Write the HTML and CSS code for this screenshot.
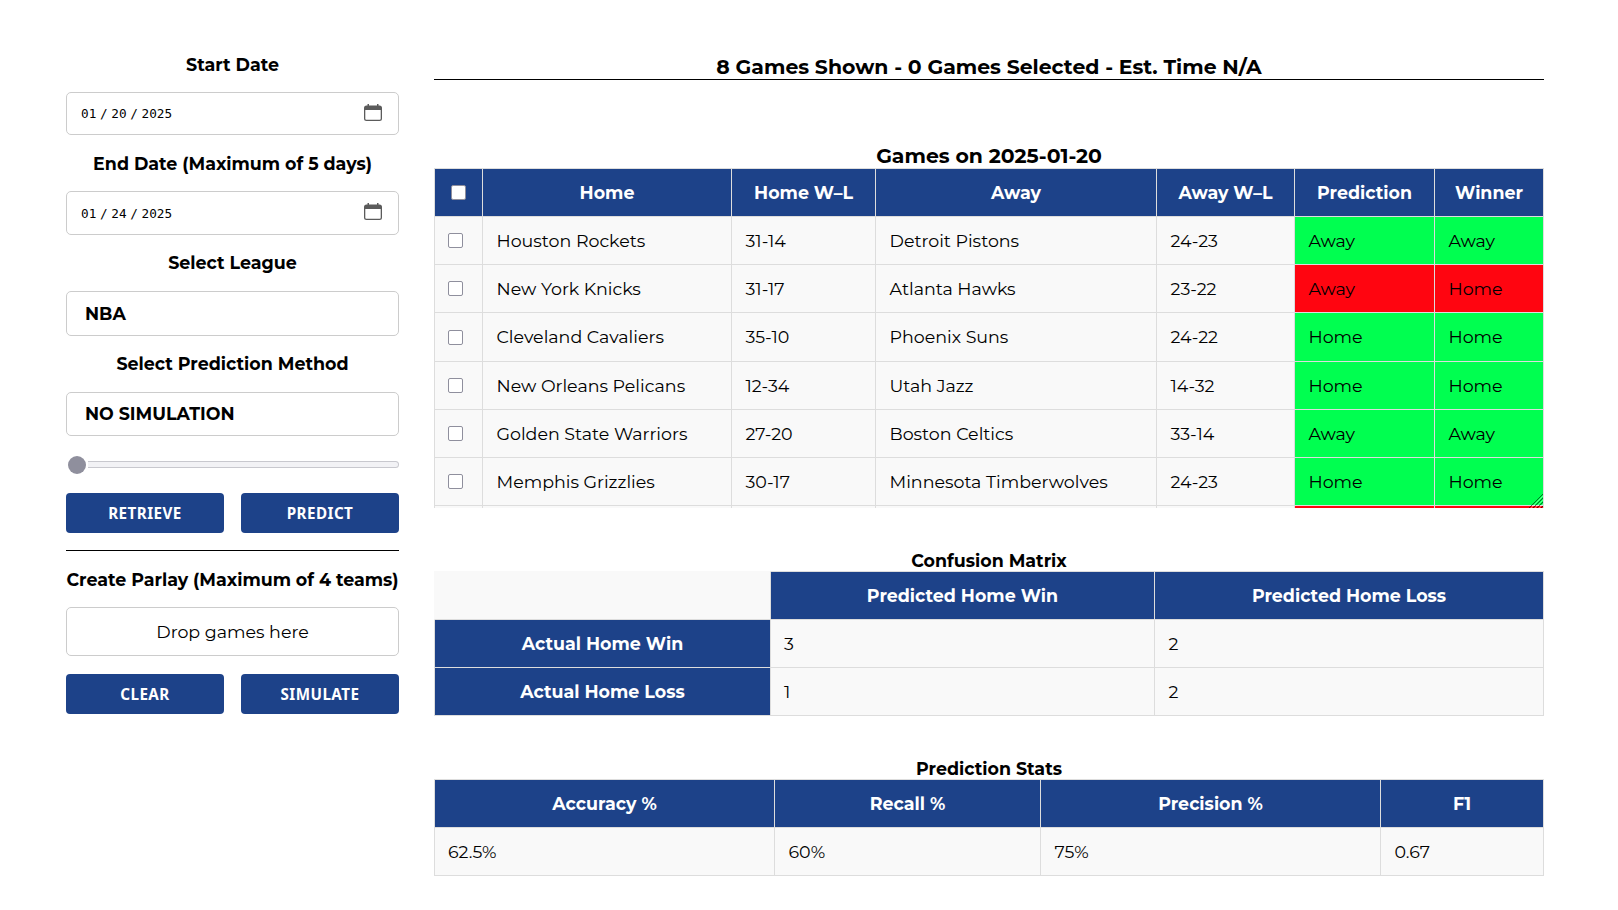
FILE: index.html
```html
<!DOCTYPE html>
<html lang="en">
<head>
<meta charset="utf-8">
<title>Game Predictions</title>
<link rel="stylesheet" href="styles.css">
</head>
<body>
<div class="page">
<aside class="sidebar">
  <div class="label start">Start Date</div>
  <div class="date"><span class="parts"><span>01</span><i>/</i><span>20</span><i>/</i><span>2025</span></span>
    <svg class="cal" width="18" height="18" viewBox="0 0 18 18"><path fill="#5b5b5b" fill-rule="evenodd" d="M3.500 0h1.500v1.500h8V0h1.500v1.500h1A2.500 2.500 0 0 1 18 4v10.500a2.500 2.500 0 0 1-2.500 2.500h-13A2.500 2.500 0 0 1 0 14.500V4a2.500 2.500 0 0 1 2.500-2.500h1zM1.300 6v8.700a1 1 0 0 0 1 1h13.400a1 1 0 0 0 1-1V6z"/></svg></div>
  <div class="label end">End Date (Maximum of 5 days)</div>
  <div class="date second"><span class="parts"><span>01</span><i>/</i><span>24</span><i>/</i><span>2025</span></span>
    <svg class="cal" width="18" height="18" viewBox="0 0 18 18"><path fill="#5b5b5b" fill-rule="evenodd" d="M3.500 0h1.500v1.500h8V0h1.500v1.500h1A2.500 2.500 0 0 1 18 4v10.500a2.500 2.500 0 0 1-2.500 2.500h-13A2.500 2.500 0 0 1 0 14.500V4a2.500 2.500 0 0 1 2.500-2.500h1zM1.300 6v8.700a1 1 0 0 0 1 1h13.400a1 1 0 0 0 1-1V6z"/></svg></div>
  <div class="label league">Select League</div>
  <div class="select nba">NBA</div>
  <div class="label method">Select Prediction Method</div>
  <div class="select sim">NO SIMULATION</div>
  <div class="slider"><span class="thumb"></span><span class="track"></span></div>
  <div class="buttons"><button>RETRIEVE</button><button>PREDICT</button></div>
  <div class="rule"></div>
  <div class="label parlay">Create Parlay (Maximum of 4 teams)</div>
  <div class="drop">Drop games here</div>
  <div class="buttons"><button>CLEAR</button><button>SIMULATE</button></div>
</aside>
<main class="main">
  <h1 class="summary">8 Games Shown - 0 Games Selected - Est. Time N/A</h1>
  <h2 class="games-title">Games on 2025-01-20</h2>
  <div class="games">
    <table>
      <colgroup><col class="g1"><col class="g2"><col class="g3"><col class="g4"><col class="g5"><col class="g6"><col class="g7"></colgroup>
      <tr><th><span class="box"></span></th><th>Home</th><th>Home W–L</th><th>Away</th><th>Away W–L</th><th>Prediction</th><th>Winner</th></tr>
      <tr><td><span class="box"></span></td><td>Houston Rockets</td><td>31-14</td><td>Detroit Pistons</td><td>24-23</td><td class="hit">Away</td><td class="hit">Away</td></tr>
      <tr><td><span class="box"></span></td><td>New York Knicks</td><td>31-17</td><td>Atlanta Hawks</td><td>23-22</td><td class="miss">Away</td><td class="miss">Home</td></tr>
      <tr class="tall"><td><span class="box"></span></td><td>Cleveland Cavaliers</td><td>35-10</td><td>Phoenix Suns</td><td>24-22</td><td class="hit">Home</td><td class="hit">Home</td></tr>
      <tr><td><span class="box"></span></td><td>New Orleans Pelicans</td><td>12-34</td><td>Utah Jazz</td><td>14-32</td><td class="hit">Home</td><td class="hit">Home</td></tr>
      <tr><td><span class="box"></span></td><td>Golden State Warriors</td><td>27-20</td><td>Boston Celtics</td><td>33-14</td><td class="hit">Away</td><td class="hit">Away</td></tr>
      <tr><td><span class="box"></span></td><td>Memphis Grizzlies</td><td>30-17</td><td>Minnesota Timberwolves</td><td>24-23</td><td class="hit">Home</td><td class="hit">Home</td></tr>
      <tr><td></td><td></td><td></td><td></td><td></td><td class="miss"></td><td class="miss"></td></tr>
    </table>
    <svg class="grip" width="14" height="15" viewBox="0 0 14 15"><g fill="none" stroke="#000" stroke-opacity=".55"><path d="M0 15 14 1M4 15 14 5M8 15l6-6M12 15l2-2"/></g><path d="M2 15 14 3M6 15l8-8M10 15l4-4" stroke="#fff" stroke-opacity=".35" fill="none"/></svg>
  </div>
  <h3 class="matrix-title">Confusion Matrix</h3>
  <table>
    <colgroup><col class="m1"><col class="m2"><col class="m3"></colgroup>
    <tr><td class="corner"></td><th>Predicted Home Win</th><th>Predicted Home Loss</th></tr>
    <tr><th>Actual Home Win</th><td>3</td><td>2</td></tr>
    <tr><th>Actual Home Loss</th><td>1</td><td>2</td></tr>
  </table>
  <h3 class="stats-title">Prediction Stats</h3>
  <table>
    <colgroup><col class="s1"><col class="s2"><col class="s3"><col class="s4"></colgroup>
    <tr><th>Accuracy %</th><th>Recall %</th><th>Precision %</th><th>F1</th></tr>
    <tr><td>62.5%</td><td>60%</td><td>75%</td><td>0.67</td></tr>
  </table>
</main>
</div>
</body>
</html>
```
FILE: styles.css
```css
* { box-sizing: border-box; }
body { margin: 0; background: #fff; color: #000; font-family: Montserrat, Inter, sans-serif; font-size: 17.450px; line-height: 20px; }
.page { display: flex; gap: 35px; width: 1618px; height: 910px; padding: 52px 74px 0 66px; overflow: hidden; }
.sidebar { width: 333px; flex: none; display: flex; flex-direction: column; }
.label { height: 20px; margin: 20px 0 16px; text-align: center; font-weight: 700; white-space: nowrap; display: flex; justify-content: center; }
.label.start { margin: 3px 0 17px; }
.label.end { margin: 19px 0 17px; }
.label.league { margin: 18px 0 18px; }
.label.method { margin: 18px 0 18px; }
.label.parlay { margin: 19px 0 17px; }
.date, .select, .drop { border: 1px solid #ccc; border-radius: 5px; display: flex; align-items: center; }
.date { height: 43px; padding: 0 16px 0 14px; justify-content: space-between; font: 12.700px "DejaVu Sans Mono", monospace; }
.date.second { height: 44px; }
.parts { display: flex; }
.parts i { font-style: normal; width: 15px; text-align: center; }
.cal { margin-top: -2px; }
.select { height: 45px; padding-left: 18px; padding-top: 1px; font-weight: 700; }
.select.sim { height: 44px; padding-top: 0; }
.slider { height: 18px; margin: 20px 0 19px; padding-left: 2px; display: flex; align-items: center; gap: 2px; }
.thumb { width: 18px; height: 18px; border-radius: 50%; background: #8f8f9d; }
.track { flex: 1; height: 7px; margin-bottom: 1px; border: 1px solid #c8c8ce; border-left: 0; border-radius: 0 4px 4px 0; background: #f2f2f5; }
.buttons { display: flex; gap: 17px; }
button { flex: 1; height: 40px; padding: 1px 0 0; border: 0; border-radius: 4px; background: #1d4289; color: #fff; font: 700 15.200px/39px "Noto Sans", sans-serif; letter-spacing: 0.45px; }
.rule { height: 1px; margin-top: 17px; background: #000; }
.drop { height: 49px; justify-content: center; margin-bottom: 18px; }
.main { width: 1110px; flex: none; }
h1, h2, h3 { margin: 0; text-align: center; font-weight: 700; }
.summary { height: 28px; border-bottom: 1px solid #000; font-size: 20.420px; line-height: 30px; }
.games-title { margin-top: 64px; height: 24px; font-size: 20.420px; line-height: 23px; }
.matrix-title, .stats-title { height: 20px; font-size: 17.450px; line-height: 20px; }
.matrix-title { margin-top: 43px; }
.stats-title { margin-top: 43px; }
.games { position: relative; height: 340px; overflow: hidden; }
.grip { position: absolute; right: 1px; bottom: 0; }
table { width: 1110px; table-layout: fixed; border-collapse: separate; border-spacing: 0; }
th, td { height: 48px; padding: 0 13px; border: solid #ddd; border-width: 0 1px 1px 0; white-space: nowrap; }
tr:first-child > * { height: 49px; border-top-width: 1px; }
tr > :first-child { border-left-width: 1px; }
th { background: #1d4289; color: #fff; font-weight: 700; }
td { background: #f9f9f9; text-align: left; }
td + td { padding-left: 13.500px; }
.tall td { height: 49px; }
.hit { background: #00ff50; }
.miss { background: #ff0510; }
.corner { border-top-color: #f9f9f9; border-left-color: #f9f9f9; }
.box { display: block; width: 15px; height: 15px; border: 1px solid #8f8f9d; border-radius: 2px; background: #fff; }
th .box { margin: 0 auto; }
.g1 { width: 49px; } .g2 { width: 249px; } .g3 { width: 144px; } .g4 { width: 281px; } .g5 { width: 138px; } .g6 { width: 140px; } .g7 { width: 109px; }
.m1 { width: 337px; } .m2 { width: 384px; } .m3 { width: 389px; }
.s1 { width: 341px; } .s2 { width: 266px; } .s3 { width: 340px; } .s4 { width: 163px; }
```
